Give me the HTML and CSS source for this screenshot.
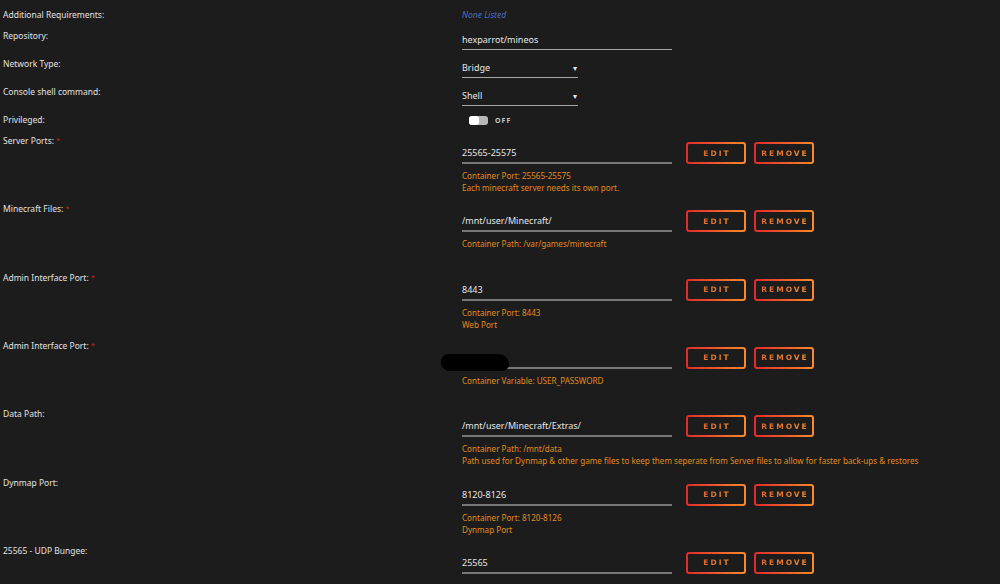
FILE: index.html
```html
<!DOCTYPE html>
<html lang="en">
<head>
    <meta charset="UTF-8">
    <meta name="viewport" content="width=device-width, initial-scale=1.0">
    <title>Container Settings</title>
    <link rel="stylesheet" href="styles.css">
</head>
<body>

    <div class="settings">
        <div class="row short">
            <div class="label">Additional Requirements:</div>
            <div class="value"><span class="none">None Listed</span></div>
        </div>
        <div class="row field">
            <div class="label">Repository:</div>
            <div class="value"><div class="input wide">hexparrot/mineos</div></div>
        </div>
        <div class="row field">
            <div class="label">Network Type:</div>
            <div class="value"><div class="input select">Bridge<span class="arrow">&#9662;</span></div></div>
        </div>
        <div class="row field">
            <div class="label">Console shell command:</div>
            <div class="value"><div class="input select">Shell<span class="arrow">&#9662;</span></div></div>
        </div>
        <div class="row short">
            <div class="label">Privileged:</div>
            <div class="value">
                <div class="switch"><span class="track"><span class="knob"></span></span><span class="switch-text">OFF</span></div>
            </div>
        </div>

        <div class="row port">
            <div class="label">Server Ports: <span class="req">*</span></div>
            <div class="value">
                <div class="controls">
                    <div class="input line">25565-25575</div>
                    <button class="btn"><span>EDIT</span></button>
                    <button class="btn"><span>REMOVE</span></button>
                </div>
                <div class="desc">Container Port: 25565-25575<br>Each minecraft server needs its own port.</div>
            </div>
        </div>
        <div class="row port">
            <div class="label">Minecraft Files: <span class="req">*</span></div>
            <div class="value">
                <div class="controls">
                    <div class="input line">/mnt/user/Minecraft/</div>
                    <button class="btn"><span>EDIT</span></button>
                    <button class="btn"><span>REMOVE</span></button>
                </div>
                <div class="desc">Container Path: /var/games/minecraft</div>
            </div>
        </div>
        <div class="row port">
            <div class="label">Admin Interface Port: <span class="req">*</span></div>
            <div class="value">
                <div class="controls">
                    <div class="input line">8443</div>
                    <button class="btn"><span>EDIT</span></button>
                    <button class="btn"><span>REMOVE</span></button>
                </div>
                <div class="desc">Container Port: 8443<br>Web Port</div>
            </div>
        </div>
        <div class="row port">
            <div class="label">Admin Interface Port: <span class="req">*</span></div>
            <div class="value">
                <div class="controls">
                    <div class="input line"></div>
                    <button class="btn"><span>EDIT</span></button>
                    <button class="btn"><span>REMOVE</span></button>
                </div>
                <div class="desc">Container Variable: USER_PASSWORD</div>
                <div class="redact"></div>
            </div>
        </div>
        <div class="row port">
            <div class="label">Data Path:</div>
            <div class="value">
                <div class="controls">
                    <div class="input line">/mnt/user/Minecraft/Extras/</div>
                    <button class="btn"><span>EDIT</span></button>
                    <button class="btn"><span>REMOVE</span></button>
                </div>
                <div class="desc">Container Path: /mnt/data<br>Path used for Dynmap &amp; other game files to keep them seperate from Server files to allow for faster back-ups &amp; restores</div>
            </div>
        </div>
        <div class="row port">
            <div class="label">Dynmap Port:</div>
            <div class="value">
                <div class="controls">
                    <div class="input line">8120-8126</div>
                    <button class="btn"><span>EDIT</span></button>
                    <button class="btn"><span>REMOVE</span></button>
                </div>
                <div class="desc">Container Port: 8120-8126<br>Dynmap Port</div>
            </div>
        </div>
        <div class="row port">
            <div class="label">25565 - UDP Bungee:</div>
            <div class="value">
                <div class="controls">
                    <div class="input line">25565</div>
                    <button class="btn"><span>EDIT</span></button>
                    <button class="btn"><span>REMOVE</span></button>
                </div>
            </div>
        </div>
    </div>

</body>
</html>
```

FILE: styles.css
```css
body {
    background-color: #1c1c1c;
    color: #e2e2e2;
    font-family: "Noto Sans", Arial, sans-serif;
    font-size: 8.5px;
    margin: 0;
    overflow: hidden;
}
.settings {
    padding: 8px 0 0 3px;
}
.row {
    display: grid;
    grid-template-columns: 459px 1fr;
    align-items: start;
}
.row.short {
    height: 21px;
}
.row.field {
    height: 28px;
}
.row.port {
    height: 68.33px;
}
.label {
    line-height: 14px;
}
.req {
    color: #cc1f1f;
    font-size: 7px;
    vertical-align: top;
}
.value {
    position: relative;
}
.none {
    color: #4a6fbf;
    font-style: italic;
    line-height: 14px;
}
.input {
    box-sizing: border-box;
    padding: 4px 0 0;
    height: 21px;
    line-height: 14px;
    font-size: 9px;
    border-bottom: 1px solid #a8a8a8;
    color: #e6e6e6;
}
.input.wide {
    width: 210px;
}
.input.select {
    width: 116px;
    display: flex;
    justify-content: space-between;
}
.arrow {
    font-size: 8px;
    margin-right: 1px;
}
.switch {
    display: flex;
    align-items: center;
    height: 14px;
    margin-left: 7px;
}
.track {
    width: 19px;
    height: 9px;
    background-color: #b8b8b8;
    border-radius: 3px;
    display: flex;
}
.knob {
    width: 10px;
    height: 9px;
    background-color: #ffffff;
    border-radius: 3px;
}
.switch-text {
    margin-left: 7px;
    font-size: 7px;
    font-weight: bold;
    letter-spacing: 1px;
    color: #c8c8c8;
}
.controls {
    display: flex;
    align-items: flex-end;
    margin-top: 8px;
}
.input.line {
    width: 210px;
    height: 22px;
    padding-top: 4px;
    border-bottom: 2px solid #777777;
}
.btn {
    box-sizing: border-box;
    width: 60px;
    height: 22px;
    margin-left: 8px;
    padding: 0 0 0 2px;
    border: 2px solid transparent;
    border-radius: 3px;
    background: linear-gradient(#1c1c1c, #1c1c1c) padding-box,
                linear-gradient(90deg, #e22a2a, #f98a2c) border-box;
    font-family: "DejaVu Sans", sans-serif;
    font-size: 7.5px;
    font-weight: bold;
    letter-spacing: 2px;
    cursor: pointer;
}
.btn:first-of-type {
    margin-left: 14px;
}
.btn span {
    background: linear-gradient(90deg, #e2692a, #f48d32);
    -webkit-background-clip: text;
    background-clip: text;
    color: transparent;
}
.desc {
    margin-top: 6px;
    line-height: 12px;
    font-size: 8.1px;
    color: #e08a1c;
}
.redact {
    position: absolute;
    left: -21px;
    top: 15px;
    width: 68px;
    height: 17px;
    background-color: #000000;
    border-radius: 9px 12px 8px 10px;
}
```
